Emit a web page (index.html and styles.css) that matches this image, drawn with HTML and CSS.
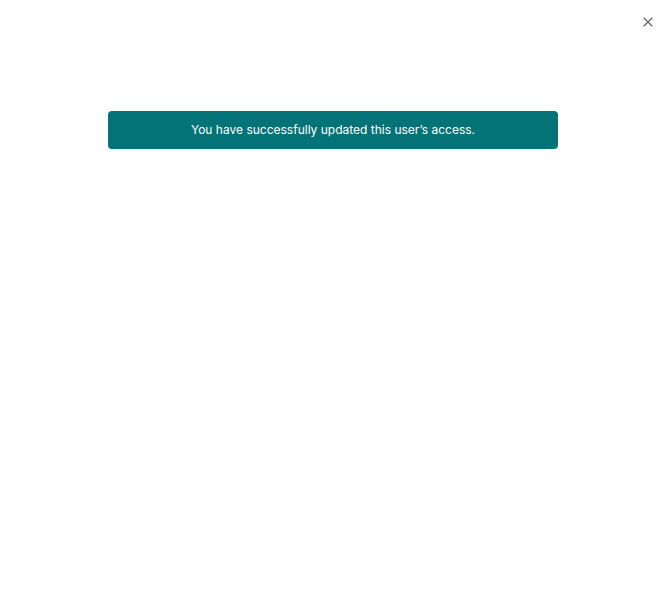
FILE: index.html
```html
<!DOCTYPE html>
<html lang="en">
<head>
<meta charset="utf-8">
<meta name="viewport" content="width=device-width, initial-scale=1">
<title>User access</title>
<link rel="stylesheet" href="styles.css">
</head>
<body>
<main class="dialog" role="dialog" aria-label="User access">
  <header class="dialog-header">
    <button class="close" type="button" aria-label="Close">
      <svg width="10" height="10" viewBox="0 0 10 10" aria-hidden="true"><path d="M0.7 0.7 9.3 9.3M9.3 0.7 0.7 9.3" fill="none" stroke="currentColor" stroke-width="1.3"/></svg>
    </button>
  </header>
  <p class="alert" role="status">You have successfully updated this user’s access.</p>
</main>
</body>
</html>
```
FILE: styles.css
```css
* {
  box-sizing: border-box;
}

body {
  margin: 0;
  background: #fff;
  font-family: Inter, "Open Sans", sans-serif;
}

.dialog {
  display: flex;
  flex-direction: column;
  min-height: 100vh;
}

.dialog-header {
  display: flex;
  justify-content: flex-end;
  padding: 12px 10px;
}

.close {
  display: flex;
  align-items: center;
  justify-content: center;
  width: 20px;
  height: 20px;
  padding: 0;
  border: 0;
  background: none;
  color: #666;
  cursor: pointer;
}

.alert {
  align-self: center;
  width: calc(100% - 218px);
  margin: 67px 2px 0 0;
  padding: 9px 16px;
  border-radius: 4px;
  background: #047377;
  color: #fff;
  font-size: 12px;
  line-height: 20px;
  text-align: center;
}
```
